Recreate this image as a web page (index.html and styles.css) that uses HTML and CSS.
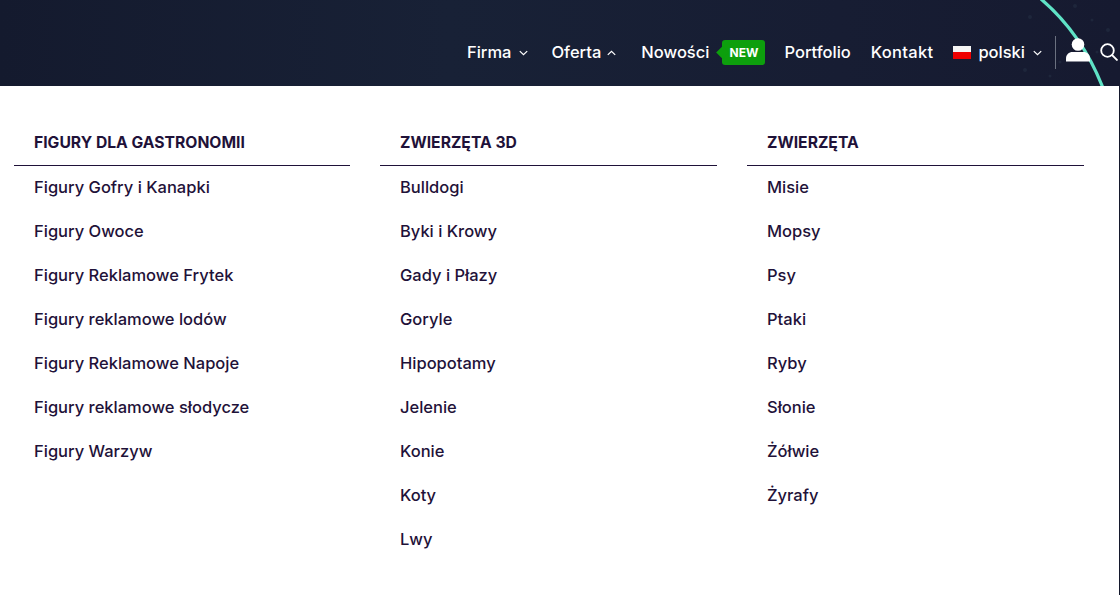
FILE: index.html
```html
<!DOCTYPE html>
<html lang="pl">
<head>
<meta charset="utf-8">
<title>Figury</title>
<link rel="stylesheet" href="styles.css">
</head>
<body>
<header class="header">
  <svg class="arc" viewBox="0 0 120 86" aria-hidden="true">
    <g class="dots"><circle cx="30" cy="17" r="2"/><circle cx="75" cy="6" r="2"/><circle cx="92" cy="20" r="1.500"/><circle cx="108" cy="30" r="2"/><circle cx="25" cy="70" r="2"/><circle cx="50" cy="76" r="1.500"/><circle cx="97" cy="52" r="1.500"/><circle cx="60" cy="62" r="1.500"/></g>
    <path class="arc-line" d="M41 -1Q82 34 103 88"/>
  </svg>
  <nav class="nav">
    <a class="nav-link firma">Firma<svg class="chev" viewBox="0 0 8 5"><path d="M.7.8 4 4 7.3.8" /></svg></a>
    <a class="nav-link oferta">Oferta<svg class="chev" viewBox="0 0 8 5"><path d="M.7 4.200 4 1l3.300 3.200" /></svg></a>
    <span class="news"><a class="nav-link">Nowości</a><span class="badge">NEW</span></span>
    <a class="nav-link portfolio">Portfolio</a>
    <a class="nav-link kontakt">Kontakt</a>
    <a class="nav-link lang"><span class="flag"></span>polski<svg class="chev" viewBox="0 0 8 5"><path d="M.7.8 4 4 7.3.8" /></svg></a>
    <span class="divider"></span>
    <svg class="user" viewBox="0 0 24 24"><circle cx="12" cy="6.500" r="6.300"/><path d="M0 23.500v-3c0-4 3-6.500 6.500-6.500h11c3.500 0 6.500 2.500 6.500 6.500v3z"/></svg>
    <svg class="search" viewBox="0 0 18 18"><circle cx="7.500" cy="7.500" r="6.300"/><path d="m12 12 5.500 5.500"/></svg>
  </nav>
</header>
<main class="menu">
  <section class="col">
    <h3 class="col-title">FIGURY DLA GASTRONOMII</h3>
    <a class="item">Figury Gofry i Kanapki</a>
    <a class="item">Figury Owoce</a>
    <a class="item">Figury Reklamowe Frytek</a>
    <a class="item">Figury reklamowe lodów</a>
    <a class="item">Figury Reklamowe Napoje</a>
    <a class="item">Figury reklamowe słodycze</a>
    <a class="item">Figury Warzyw</a>
  </section>
  <section class="col">
    <h3 class="col-title">ZWIERZĘTA 3D</h3>
    <a class="item">Bulldogi</a>
    <a class="item">Byki i Krowy</a>
    <a class="item">Gady i Płazy</a>
    <a class="item">Goryle</a>
    <a class="item">Hipopotamy</a>
    <a class="item">Jelenie</a>
    <a class="item">Konie</a>
    <a class="item">Koty</a>
    <a class="item">Lwy</a>
  </section>
  <section class="col">
    <h3 class="col-title">ZWIERZĘTA</h3>
    <a class="item">Misie</a>
    <a class="item">Mopsy</a>
    <a class="item">Psy</a>
    <a class="item">Ptaki</a>
    <a class="item">Ryby</a>
    <a class="item">Słonie</a>
    <a class="item">Żółwie</a>
    <a class="item">Żyrafy</a>
  </section>
</main>
</body>
</html>
```
FILE: styles.css
```css
* { box-sizing: border-box; }
html, body { margin: 0; padding: 0; overflow: hidden; }
body { height: 595px; background: #fff; font-family: Inter, "Open Sans", sans-serif; color: #1f1239; }
.header {
  position: relative;
  height: 86px;
  background: linear-gradient(90deg, #141a2e 0%, #182136 40%, #171d33 75%, #161a30 100%);
  display: flex;
  justify-content: flex-end;
  overflow: hidden;
}
.arc { position: absolute; right: 0; top: 0; width: 120px; height: 86px; }
.arc-line { fill: none; stroke: #5fe3c6; stroke-width: 3.200; }
.dots { fill: #1e263b; }
.nav { position: relative; display: flex; align-items: center; padding: 18px 2px 0 0; height: 86px; color: #fff; }
.nav-link { display: flex; align-items: center; font-size: 16.500px; font-weight: 500; color: #fff; white-space: nowrap; }
.firma .chev { margin-left: 8px; }
.oferta { margin-left: 23px; }
.oferta .chev { margin-left: 6px; }
.news { display: flex; align-items: center; margin-left: 25px; }
.portfolio { margin-left: 19px; }
.kontakt { margin-left: 20px; letter-spacing: .3px; }
.chev { width: 9px; height: 6px; margin-left: 8px; margin-top: 2px; fill: none; stroke: #fff; stroke-width: 1.100; }
.badge {
  position: relative;
  margin-left: 13px;
  width: 43px;
  height: 25px;
  border-radius: 3px;
  background: #0d9f0d;
  color: #fff;
  font-size: 12px;
  font-weight: 700;
  display: flex;
  align-items: center;
  justify-content: center;
}
.badge::before {
  content: "";
  position: absolute;
  left: -4px;
  top: 8px;
  width: 9px;
  height: 9px;
  background: #0d9f0d;
  transform: rotate(45deg);
}
.lang { margin-left: 20px; }
.flag { width: 18px; height: 13px; margin-right: 7px; background: linear-gradient(#f5f5f5 50%, #ee0000 50%); }
.divider { width: 1px; height: 33px; margin-left: 13px; background: #6b7180; }
.user { width: 24px; height: 24px; margin-left: 10px; margin-top: -5px; fill: #fff; }
.search { width: 18px; height: 18px; margin-left: 10px; fill: none; stroke: #fff; stroke-width: 1.800; }
.menu { display: grid; grid-template-columns: 336px 337px 337px; column-gap: 30px; height: 509px; padding: 35px 0 0 14px; border-right: 1px solid #14182c; }
.col { display: flex; flex-direction: column; }
.col-title { margin: 0; height: 45px; padding: 0 20px 1px; display: flex; align-items: center; border-bottom: 1px solid #1f1239; font-size: 15.700px; font-weight: 700; color: #1f1239; }
.item { height: 44px; padding: 0 20px 2px; display: flex; align-items: center; font-size: 16.500px; font-weight: 450; color: #1f1239; }
```
